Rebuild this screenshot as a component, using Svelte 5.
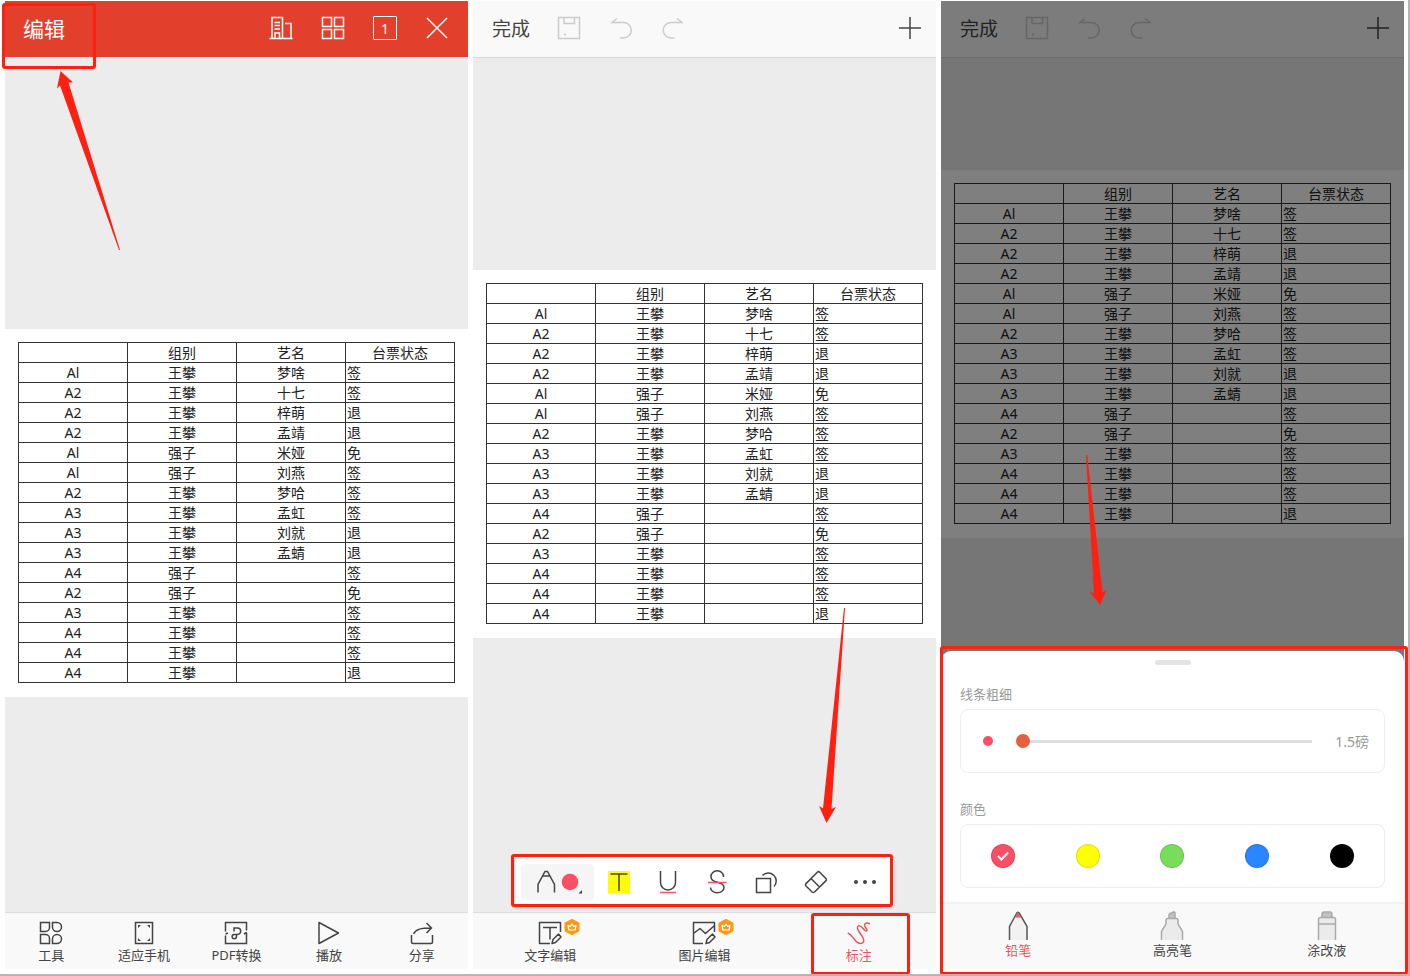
<script lang="ts">
  type Row = [string, string, string, string];

  const rows: Row[] = [
    ['Al', '王攀', '梦啥', '签'],
    ['A2', '王攀', '十七', '签'],
    ['A2', '王攀', '梓萌', '退'],
    ['A2', '王攀', '孟靖', '退'],
    ['Al', '强子', '米娅', '免'],
    ['Al', '强子', '刘燕', '签'],
    ['A2', '王攀', '梦哈', '签'],
    ['A3', '王攀', '孟虹', '签'],
    ['A3', '王攀', '刘就', '退'],
    ['A3', '王攀', '孟蜻', '退'],
    ['A4', '强子', '', '签'],
    ['A2', '强子', '', '免'],
    ['A3', '王攀', '', '签'],
    ['A4', '王攀', '', '签'],
    ['A4', '王攀', '', '签'],
    ['A4', '王攀', '', '退'],
  ];

  const colors = [
    { name: '红色', value: '#fb4f66' },
    { name: '黄色', value: '#ffff00' },
    { name: '绿色', value: '#77dd5a' },
    { name: '蓝色', value: '#2a86ff' },
    { name: '黑色', value: '#000000' },
  ];

  let color = $state('#fb4f66');
  let width = $state(1.5);
</script>

{#snippet sheet()}
  <div class="paper">
    <table>
      <thead>
        <tr><th></th><th>组别</th><th>艺名</th><th>台票状态</th></tr>
      </thead>
      <tbody>
        {#each rows as row}
          <tr>
            {#each row as cell}<td>{cell}</td>{/each}
          </tr>
        {/each}
      </tbody>
    </table>
  </div>
{/snippet}

{#snippet editHeader()}
  <header class="bar edit">
    <button class="done">完成</button>
    <button class="faded" aria-label="保存">
      <svg viewBox="0 0 24 24"><path d="M1.5 1.5h21v21h-21zM7 1.5v6h10.500v-6" /><path d="M7 18.500h2" stroke-width="2" /></svg>
    </button>
    <button class="faded" aria-label="撤销">
      <svg viewBox="0 0 24 24"><path d="M9 2.500 4 6.500h11.500a7.500 7.500 0 0 1 0 15.500h-3.500" /></svg>
    </button>
    <button class="faded" aria-label="重做">
      <svg viewBox="0 0 24 24"><path d="M18 2.500 23 6.500H12a7.500 7.500 0 0 0 0 15.500H15.500" /></svg>
    </button>
    <button class="add" aria-label="添加">
      <svg viewBox="0 0 24 24"><path d="M12 1v22M1 12h22" /></svg>
    </button>
  </header>
{/snippet}

{#snippet crown()}
  <svg class="crown" viewBox="0 0 16 16">
    <path d="M8 1 14.500 4.500v7L8 15 1.500 11.500v-7z" fill="#fc9a17" stroke="#fc9a17" stroke-width="2" stroke-linejoin="round" />
    <path d="M4 6.500l1 4.500h6l1-4.500-2.200 1L8 5.200 6.200 7.500z" fill="none" stroke="#fff" stroke-width="1.200" stroke-linejoin="round" />
  </svg>
{/snippet}

<main>
  <section class="panel">
    <header class="bar view">
      <button class="title">编辑</button>
      <button aria-label="文档">
        <svg viewBox="0 0 24 24"><path d="M0.500 22.500h23M3 22.500V1.500h10.500v21M16 7.500h6v15M5.500 6.500h5.500M5.500 9.500h5.500M5.500 13h5.500M6 22V17h4.500v5" /></svg>
      </button>
      <button aria-label="缩略图">
        <svg viewBox="0 0 24 24"><path d="M1.500 1.500h9v9H1.500zM13.500 1.500h9v9H13.500zM1.500 13.500h9v9H1.500zM13.500 13.500h9v9H13.500z" /></svg>
      </button>
      <button class="page" aria-label="第 1 页"><span>1</span></button>
      <button aria-label="关闭">
        <svg viewBox="0 0 24 24"><path d="M2 2l20 20M22 2 2 22" /></svg>
      </button>
    </header>
    <div class="canvas low">
      {@render sheet()}
    </div>
    <nav class="tabs">
      <button>
        <svg viewBox="0 0 24 24"><path d="M1.500 1.500h9v5a4 4 0 0 1-4 4h-5zM13.500 1.500h4.500a4.500 4.500 0 0 1 0 9 4.500 4.500 0 0 1-4.500-4.500zM1.500 13.500h5a4 4 0 0 1 4 4v5h-9zM13.500 18a4.500 4.500 0 0 1 4.500-4.500 4.500 4.500 0 0 1 0 9h-4.500z" /></svg>
        工具
      </button>
      <button>
        <svg viewBox="0 0 24 24"><path d="M3.500 1.500h17v21h-17z" /><path d="M6 7V4h3zM18 7V4h-3zM6 17v3h3zM18 17v3h-3z" fill="currentColor" stroke="none" /></svg>
        适应手机
      </button>
      <button>
        <svg viewBox="0 0 24 24"><path d="M1.500 10.500v-9h21v8M1.500 14.500v8h21v-11M22.500 11.500 20 13M1.500 13l2.500-1" /><path d="M10 10.500V7h3.500a3.200 3.200 0 0 1 0 6.400h-3.500a2.200 2.200 0 1 0 2.500 2.200v-2" /></svg>
        PDF转换
      </button>
      <button>
        <svg viewBox="0 0 24 24"><path d="M2 1.500v21L21.500 12z" stroke-linejoin="round" /></svg>
        播放
      </button>
      <button>
        <svg viewBox="0 0 24 24"><path d="M1.500 14v7q0 1.500 1.500 1.500h18q1.500 0 1.500-1.500v-7M3.500 13C6 8 11 7 21.500 7M16.500 2l5 5-5 5" /></svg>
        分享
      </button>
    </nav>
    <div class="mark mark-title"></div>
    <svg class="arrow arrow-title" viewBox="0 0 70 182"><path d="M5.500 0 18 11.500 13.500 11.500 65 179 64 179 5 14.500 2 17.500z" /></svg>
  </section>

  <section class="panel">
    {@render editHeader()}
    <div class="canvas high">
      {@render sheet()}
      <div class="tools">
        <button class="pen" aria-label="画笔">
          <svg viewBox="0 0 24 24"><path d="M4 22.500v-8L11 1.500h2.500l7 13v8M8.500 6h7.500" /></svg>
          <svg viewBox="0 0 24 24"><circle cx="12" cy="12" r="8.300" fill="#fb4f66" stroke="none" /><path d="M24 20v3.500h-3.500z" fill="currentColor" stroke="none" /></svg>
        </button>
        <button aria-label="高亮">
          <svg viewBox="0 0 24 24"><path d="M1 1h22v22H1z" fill="#ffff00" stroke="none" /><path d="M3.500 4h17M12 4v17" /></svg>
        </button>
        <button aria-label="下划线">
          <svg viewBox="0 0 24 24"><path d="M4.500 1v11.500a7.500 7.500 0 0 0 15 0V1" /><path d="M4 22.500h16" stroke="#fb4f66" /></svg>
        </button>
        <button aria-label="删除线">
          <svg viewBox="0 0 24 24"><path d="M18.500 7a6.300 5.500 0 1 0-12.500 0c0 3 3 4.500 6.300 5.200 4 .8 6.700 2.300 6.700 5.300a6.700 5.300 0 0 1-13.500 0" /><path d="M3 12.500h18.500" stroke="#fb4f66" /></svg>
        </button>
        <button aria-label="形状">
          <svg viewBox="0 0 24 24"><path d="M1.500 8.500h14v14h-14zM7.500 5.500a7.500 7.500 0 1 1 11.500 11" /></svg>
        </button>
        <button aria-label="橡皮擦">
          <svg viewBox="0 0 24 24"><path d="M13.300 2.200q1.200-1.200 2.400 0l6.100 6.300q1.200 1.200 0 2.400L10.500 22q-1.200 1-2.400 0L2 16q-1-1.200 0-2.400zM7 8.500l8.500 8.500" stroke-linejoin="round" /></svg>
        </button>
        <button aria-label="更多">
          <svg viewBox="0 0 24 24"><g fill="currentColor" stroke="none"><circle cx="3" cy="12" r="2" /><circle cx="12" cy="12" r="2" /><circle cx="21" cy="12" r="2" /></g></svg>
        </button>
        <div class="mark mark-tools"></div>
      </div>
    </div>
    <nav class="tabs">
      <button>
        <span class="glyph">
          <svg viewBox="0 0 24 24"><path d="M12 22.500H1.500v-21h21V11M5 6.500h14M12 6.500v12M14 22.500l1-4 5.500-5.500 2.500 3-5.500 5.500z" stroke-linejoin="round" /></svg>
          {@render crown()}
        </span>
        文字编辑
      </button>
      <button>
        <span class="glyph">
          <svg viewBox="0 0 24 24"><path d="M11 22.500H1.500v-21h21V11M1.500 12.500 8 7.500l5.500 5 9-8M14 22.500l1-4 5.500-5.500 2.500 3-5.500 5.500z" stroke-linejoin="round" /></svg>
          {@render crown()}
        </span>
        图片编辑
      </button>
      <button class="active">
        <svg viewBox="0 0 24 24"><path d="M1.200 12.300C4 13.500 5.500 16 7.500 18.500c2 2.500 4.500 4.300 6.800 4 2.700-.5 3-2.700 1.700-5.500-1.200-2.700-3.200-5-4.700-7.500C10 7 10.200 5 12 4.800c2.200-.2 3.700 2.500 5.500 4.200 1.500 1.400 3.200 1.300 2.200-.8-.8-1.500-2.500-3-2.200-4.500.3-1.400 2.500-2.200 5-1" stroke-linecap="round" /></svg>
        标注
        <div class="mark mark-tab"></div>
      </button>
    </nav>
    <svg class="arrow arrow-tools" viewBox="0 0 30 218"><path d="M28 1h1L15.500 202l4.500-2L10.500 216 3 199l4 2.500z" /></svg>
  </section>

  <section class="panel">
    {@render editHeader()}
    <div class="canvas dimmed">
      {@render sheet()}
    </div>
    <div class="scrim"></div>
    <div class="drawer">
      <div class="handle"></div>
      <label class="caption" for="line-width">线条粗细</label>
      <div class="card">
        <span class="dot"></span>
        <input id="line-width" type="range" min="1.5" max="20" step="0.5" bind:value={width} />
        <output>{width}磅</output>
      </div>
      <div class="caption" id="color-caption">颜色</div>
      <div class="card swatches" role="radiogroup" aria-labelledby="color-caption">
        {#each colors as c}
          <label style="--swatch: {c.value}">
            <input type="radio" name="color" value={c.value} aria-label={c.name} bind:group={color} />
            {#if color === c.value}
              <svg viewBox="0 0 24 24"><path d="M7 12l3.500 3.500 6.500-7" /></svg>
            {/if}
          </label>
        {/each}
      </div>
      <nav class="tabs pens">
        <button class="active">
          <svg viewBox="0 0 24 29"><path d="M3.500 29V15.500L10.500 2.500q1.500-2.500 3 0l7.500 13V29" fill="#f2f2f2" stroke="#555" /><path d="M9.200 6.500l1.800-3.500q1-1.500 2 0l2 3.500z" fill="#fb4f66" stroke="none" /></svg>
          铅笔
        </button>
        <button>
          <svg viewBox="0 0 24 29"><path d="M9 8V4q0-1 1-1.500l3.500-1.500q1.500-.3 1.500 1V8z" fill="#c2c2c2" stroke="#aaa" /><path d="M1.500 29v-8q0-1 .5-1.500L5.500 14q.5-1 .5-2v-2.500q0-2 2-2h8q2 0 2 2V12q0 1 .5 2l3.500 5.500q.5.500.5 1.500v8" fill="#ebebeb" stroke="#aaa" /></svg>
          高亮笔
        </button>
        <button>
          <svg viewBox="0 0 24 29"><path d="M7 7V4q0-3 2-3h6q2 0 2 3v3z" fill="#c2c2c2" stroke="#aaa" /><path d="M3.500 29V8.500q0-2 2-2h13q2 0 2 2V29M3.500 13h17" fill="#ebebeb" stroke="#aaa" /></svg>
          涂改液
        </button>
      </nav>
      <div class="mark mark-drawer"></div>
    </div>
    <svg class="arrow arrow-drawer" viewBox="0 0 24 152"><path d="M1 1h1.300L17.500 138.500l4-2.500L15 151 4.500 137.500l4.500 2z" /></svg>
  </section>
</main>

<style>
  :global(body) {
    margin: 0;
  }

  main {
    box-sizing: border-box;
    min-height: 100vh;
    padding: 1px 4px 5px 5px;
    border-right: 2px solid #b5b5b5;
    border-bottom: 2px solid #b5b5b5;
    display: grid;
    grid-template-columns: repeat(3, 1fr);
    gap: 5px;
    background: #fff;
    color: #444;
    font-family: 'Noto Sans', 'Noto Sans CJK SC', sans-serif;
    overflow: hidden;
  }

  button {
    margin: 0;
    padding: 0;
    border: 0;
    background: none;
    color: inherit;
    font: inherit;
    cursor: pointer;
  }

  svg {
    display: block;
    width: 24px;
    height: 24px;
    fill: none;
    stroke: currentColor;
    stroke-width: 1.5;
  }

  .panel {
    position: relative;
    display: flex;
    flex-direction: column;
    background: #ececec;
  }

  .bar {
    height: 54px;
    padding-bottom: 2px;
    display: flex;
    align-items: center;
    gap: 28px;
  }

  .view {
    padding-right: 19px;
    padding-left: 18px;
    background: #e23f2d;
    color: #fff;
  }

  .title {
    margin-right: auto;
    font-size: 21px;
  }

  .page {
    width: 24px;
    height: 24px;
    display: flex;
    justify-content: center;
    align-items: center;
    border: 1px solid #fff;
    border-radius: 1px;
    box-sizing: border-box;
    font-size: 14px;
  }

  .edit {
    padding-right: 14px;
    padding-left: 19px;
    gap: 27px;
    background: #f9f9f9;
    border-bottom: 1px solid #d8d8d8;
  }

  .done {
    font-size: 19px;
  }

  .faded {
    color: #ccc;
  }

  .add {
    margin-left: auto;
  }

  .canvas {
    flex: 1;
    position: relative;
    display: flex;
    flex-direction: column;
    justify-content: center;
  }

  .low {
    padding-top: 57px;
  }

  .high {
    padding-bottom: 63px;
  }

  .dimmed {
    padding-bottom: 2px;
  }

  .paper {
    padding: 13px 13px 14px;
    background: #fff;
  }

  table {
    width: 100%;
    table-layout: fixed;
    border-collapse: collapse;
    color: #222;
    font-size: 14px;
    line-height: 19px;
  }

  tr {
    height: 20px;
  }

  th,
  td {
    height: 19px;
    padding: 0;
    border: 1px solid #333;
    font-weight: normal;
    text-align: center;
  }

  td:last-child {
    padding-left: 1px;
    text-align: left;
  }

  .tools {
    position: absolute;
    right: 42px;
    bottom: 6px;
    left: 42px;
    height: 49px;
    padding: 0 4px 0 6px;
    box-sizing: border-box;
    display: flex;
    align-items: center;
    border-radius: 4px;
    background: #fff;
    box-shadow: 0 1px 4px rgba(0, 0, 0, 0.15);
  }

  .tools button {
    flex: 1;
    display: flex;
    justify-content: center;
  }

  .tools .pen {
    flex: none;
    width: 73px;
    height: 36px;
    align-items: center;
    border-radius: 4px;
    background: #f5f5f5;
  }

  .tabs {
    height: 57px;
    box-sizing: border-box;
    padding-top: 8px;
    display: flex;
    border-top: 1px solid #dedede;
    background: #f9f9f9;
    font-size: 13px;
    line-height: 18px;
  }

  .tabs button {
    flex: 1;
    position: relative;
    display: flex;
    flex-direction: column;
    align-items: center;
    gap: 1px;
  }

  .tabs .active {
    color: #e9575b;
  }

  .glyph {
    position: relative;
  }

  .crown {
    position: absolute;
    top: -2px;
    left: 26px;
    width: 16px;
    height: 16px;
  }

  .scrim {
    position: absolute;
    inset: 0;
    background: rgba(0, 0, 0, 0.5);
  }

  .drawer {
    position: relative;
    display: flex;
    flex-direction: column;
    border-radius: 10px 10px 0 0;
    background: #fff;
  }

  .handle {
    width: 36px;
    height: 5px;
    margin: 9px auto 19px;
    border-radius: 3px;
    background: #e4e4e4;
  }

  .caption {
    margin: 0 19px 5px;
    color: #999;
    font-size: 13px;
    line-height: 20px;
  }

  .card {
    height: 64px;
    margin: 0 19px 26px;
    padding: 0 15px 0 22px;
    box-sizing: border-box;
    display: flex;
    align-items: center;
    border: 1px solid #eee;
    border-radius: 8px;
  }

  .dot {
    width: 10px;
    height: 10px;
    border-radius: 50%;
    background: #fb4f66;
  }

  input[type='range'] {
    flex: 1;
    min-width: 0;
    height: 14px;
    margin: 0 23px;
    appearance: none;
    background: linear-gradient(#ddd, #ddd) center / 100% 3px no-repeat;
  }

  input[type='range']::-webkit-slider-thumb {
    appearance: none;
    width: 14px;
    height: 14px;
    border-radius: 50%;
    background: #e4603f;
  }

  output {
    color: #999;
    font-size: 14px;
  }

  .swatches {
    margin-bottom: 14px;
    padding: 0;
  }

  .swatches label {
    flex: 1;
    display: grid;
    place-items: center;
  }

  .swatches input,
  .swatches svg {
    grid-area: 1 / 1;
  }

  .swatches input {
    appearance: none;
    width: 24px;
    height: 24px;
    margin: 0;
    border: 1px solid rgba(0, 0, 0, 0.12);
    border-radius: 50%;
    background: var(--swatch);
  }

  .swatches svg {
    color: #fff;
    stroke-width: 2;
    pointer-events: none;
  }

  .pens {
    height: 67px;
    padding-top: 7px;
    border-top: 2px solid #f2f2f2;
  }

  .pens svg {
    height: 29px;
  }

  .mark {
    position: absolute;
    border: 3px solid #ff2012;
    border-radius: 3px;
    pointer-events: none;
  }

  .mark-title {
    top: 2px;
    left: -3px;
    width: 88px;
    height: 60px;
  }

  .mark-tools {
    inset: -3px 1px -1px -4px;
  }

  .mark-tab {
    inset: -8px 26px -6px 29px;
  }

  .mark-drawer {
    inset: -5px -4px -6px -1px;
  }

  .arrow {
    position: absolute;
    fill: #ff2012;
    stroke: none;
  }

  .arrow-title {
    top: 70px;
    left: 50px;
    width: 70px;
    height: 182px;
  }

  .arrow-tools {
    right: 90px;
    bottom: 144px;
    width: 30px;
    height: 218px;
  }

  .arrow-drawer {
    bottom: 363px;
    left: 144px;
    width: 24px;
    height: 152px;
  }
</style>
